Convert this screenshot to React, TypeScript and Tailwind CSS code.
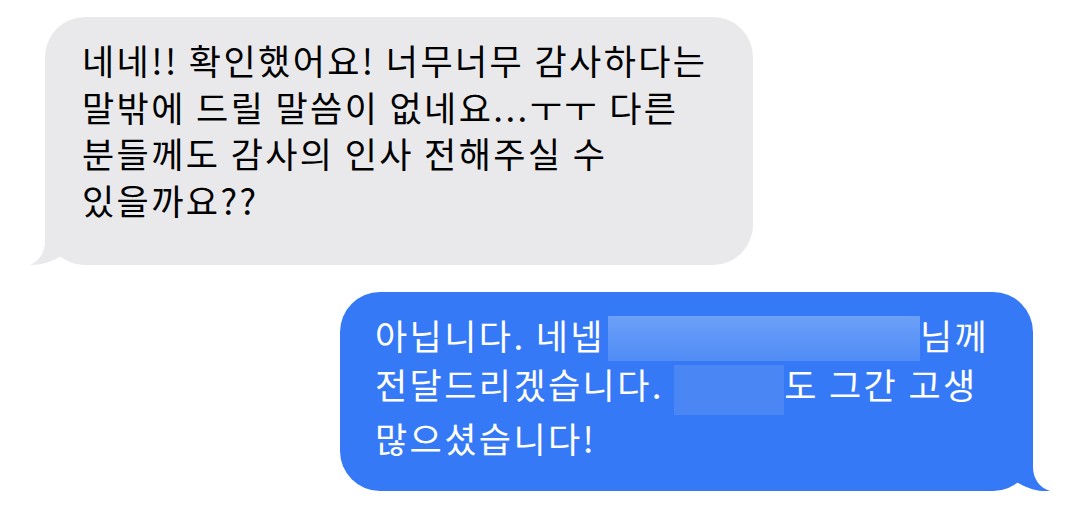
function Tail({ side, color }: { side: 'left' | 'right'; color: string }) {
  if (side === 'left') {
    return (
      <svg
        className="absolute bottom-0 -left-[15px]"
        width="60"
        height="40"
        viewBox="0 0 60 40"
      >
        <path
          d="M15,0 L15,16 C15,28 9,36 0,40 C11,40 22,37 33,30 C41,37 49,40 60,40 L60,0 Z"
          fill={color}
        />
      </svg>
    )
  }
  return (
    <svg
      className="absolute bottom-0 -right-[17px]"
      width="65"
      height="40"
      viewBox="0 0 65 40"
    >
      <path
        d="M48,0 L48,16 C48,28 55,37 65,40 C53,41 41,37 30,30 C21,37 12,40 0,40 L0,0 Z"
        fill={color}
      />
    </svg>
  )
}

function Redacted({ className }: { className: string }) {
  return <span className={`inline-block align-top ${className}`} />
}

export default function App() {
  return (
    <div
      className="w-[1080px] h-[527px] bg-white overflow-hidden flex flex-col"
      style={{ fontFamily: '"Noto Sans CJK KR", "Noto Sans", sans-serif' }}
    >
      <div className="relative ml-[45px] mt-[17px] h-[248px] w-[708px] rounded-[40px] bg-[#e9e9eb] pl-[37px] pt-[20px] text-[35px] leading-[46.7px] tracking-[2.4px] text-black whitespace-nowrap">
        네네!! 확인했어요! 너무너무 감사하다는
        <br />
        말밖에 드릴 말씀이 없네요...ㅜㅜ 다른
        <br />
        분들께도 감사의 인사 전해주실 수
        <br />
        있을까요??
        <Tail side="left" color="#e9e9eb" />
      </div>

      <div className="relative ml-[340px] mt-[27px] h-[199px] w-[693px] rounded-[40px] bg-[#3579f6] pl-[35px] pt-[20px] text-[35px] leading-[46.7px] tracking-[2.4px] text-white whitespace-nowrap">
        <span>아닙니다. 네넵</span>
        <Redacted className="ml-[3px] w-[312px] h-[45px] mt-[4px] bg-gradient-to-b from-[#6ca0f8] to-[#4f8cf5]" />
        <span>님께</span>
        <br />
        <span>전달드리겠습니다. </span>
        <Redacted className="w-[110px] h-[50px] mt-[4px] bg-[#4a86f4]" />
        <span>도 그간 고생</span>
        <br />
        많으셨습니다!
        <Tail side="right" color="#3579f6" />
      </div>
    </div>
  )
}
